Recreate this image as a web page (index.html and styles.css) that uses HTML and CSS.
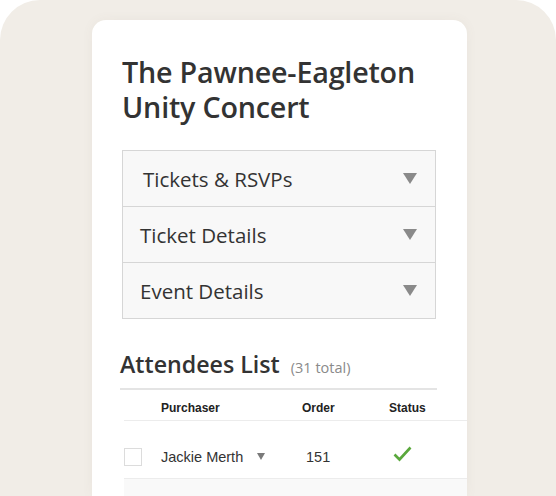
FILE: index.html
```html
<!DOCTYPE html>
<html>
<head>
<meta charset="utf-8">
<link rel="stylesheet" href="styles.css">
</head>
<body>
<div class="frame">
  <div class="card">
    <h1 class="title">The Pawnee-Eagleton<br>Unity Concert</h1>
    <div class="accordion">
      <div class="acc-row first"><span>Tickets &amp; RSVPs</span><span class="tri"></span></div>
      <div class="acc-row"><span>Ticket Details</span><span class="tri"></span></div>
      <div class="acc-row"><span>Event Details</span><span class="tri"></span></div>
    </div>
    <div class="att-head">
      <h2 class="att-title">Attendees List</h2>
      <span class="att-count">(31 total)</span>
    </div>
    <div class="table">
      <div class="thead">
        <span></span>
        <span>Purchaser</span>
        <span>Order</span>
        <span>Status</span>
      </div>
      <div class="trow">
        <span class="cb"></span>
        <span class="name">Jackie Merth <span class="tri-sm"></span></span>
        <span class="order">151</span>
        <span class="status">
          <svg width="19" height="16" viewBox="0 0 19 16"><path d="M1.5 8.5 L6.5 13.5 L17.5 1.5" fill="none" stroke="#5aa83c" stroke-width="2.6"/></svg>
        </span>
      </div>
      <div class="tfill"></div>
    </div>
  </div>
</div>
</body>
</html>
```

FILE: styles.css
```css
html, body {
  margin: 0;
  padding: 0;
  background: #ffffff;
}
.frame {
  width: 556px;
  height: 496px;
  background: #f1ede7;
  border-radius: 40px 40px 0 0;
  overflow: hidden;
  padding: 20px 0 0 92px;
  box-sizing: border-box;
}
.card {
  width: 375px;
  height: 476px;
  background: #ffffff;
  border-radius: 14px 14px 0 0;
  box-shadow: 0 0 12px rgba(120, 100, 80, 0.06);
  padding: 0 0 0 30px;
  box-sizing: border-box;
  font-family: "Open Sans", "Liberation Sans", sans-serif;
  color: #333333;
}
.title {
  margin: 0;
  padding-top: 34px;
  font-size: 28.7px;
  line-height: 35px;
  font-weight: 600;
  letter-spacing: -0.2px;
  color: #333333;
}
.accordion {
  margin-top: 26px;
  width: 314px;
  border: 1px solid #d6d6d6;
  background: #f8f8f8;
  box-sizing: border-box;
}
.acc-row {
  height: 56px;
  display: flex;
  align-items: center;
  justify-content: space-between;
  padding: 0 18px 0 17px;
  font-size: 20.5px;
  color: #333;
  border-top: 1px solid #d6d6d6;
  box-sizing: border-box;
}
.acc-row.first {
  border-top: none;
  padding-left: 20px;
  height: 55px;
}
.tri {
  width: 0;
  height: 0;
  border-left: 7px solid transparent;
  border-right: 7px solid transparent;
  border-top: 11px solid #8a8a8a;
}
.att-head {
  display: flex;
  align-items: baseline;
  margin-top: 30px;
  margin-left: -2px;
  width: 317px;
  padding-bottom: 9px;
  border-bottom: 2px solid #e4e4e4;
}
.att-title {
  margin: 0;
  font-size: 23.2px;
  font-weight: 600;
  line-height: 30px;
  color: #333;
}
.att-count {
  margin-left: 11px;
  font-size: 14.5px;
  color: #8a8a8a;
}
.table {
  margin-left: 2px;
  font-family: "Liberation Sans", Arial, sans-serif;
}
.thead, .trow {
  display: grid;
  grid-template-columns: 37px 141px 87px 1fr;
  align-items: center;
  border-bottom: 1px solid #ececec;
  box-sizing: border-box;
}
.thead {
  height: 31px;
  padding-top: 6px;
  font-size: 12px;
  font-weight: bold;
  color: #222;
}
.trow {
  height: 58px;
  padding-top: 14px;
  font-size: 14.5px;
  color: #333;
}
.cb {
  width: 16px;
  height: 16px;
  border: 1px solid #dcdcdc;
  background: #fff;
}
.name {
  display: flex;
  align-items: center;
}
.tri-sm {
  display: inline-block;
  margin-left: 14px;
  width: 0;
  height: 0;
  border-left: 4.5px solid transparent;
  border-right: 4.5px solid transparent;
  border-top: 7px solid #7a7a7a;
}
.order {
  padding-left: 4px;
}
.status {
  padding-left: 4px;
  display: flex;
  align-items: center;
  margin-top: -6px;
}
.tfill {
  height: 40px;
  background: #f9f9f9;
}
```
